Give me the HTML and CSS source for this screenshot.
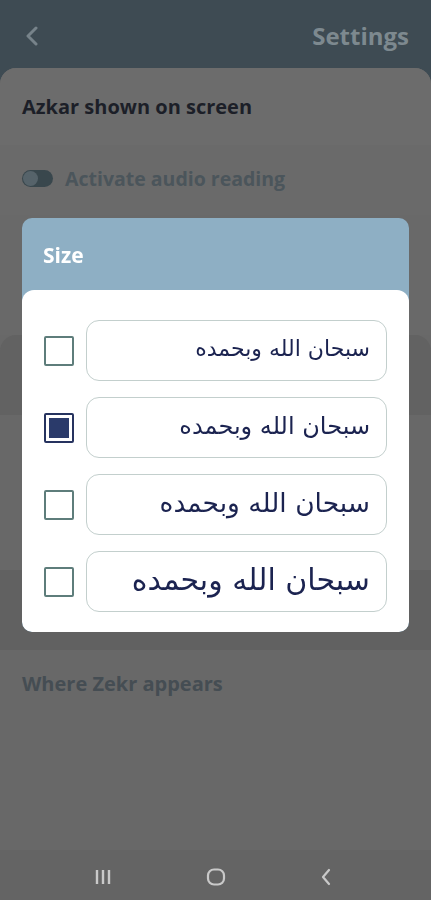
FILE: index.html
```html
<!DOCTYPE html>
<html lang="en">
<head>
    <meta charset="UTF-8">
    <meta name="viewport" content="width=device-width, initial-scale=1.0">
    <title>Settings</title>
    <link rel="stylesheet" href="styles.css">
</head>
<body>
    <div class="app">
        <header class="topbar">
            <svg class="back" width="14" height="20" viewBox="0 0 14 20">
                <path d="M11 2 L3 10 L11 18" fill="none" stroke="#77838a" stroke-width="3" stroke-linecap="round" stroke-linejoin="round"/>
            </svg>
            <span class="title">Settings</span>
        </header>

        <main class="sheet">
            <div class="section section-top">
                <h2 class="section-title">Azkar shown on screen</h2>
            </div>
            <div class="section section-audio">
                <div class="toggle-row">
                    <span class="toggle"><span class="knob"></span></span>
                    <span class="toggle-label">Activate audio reading</span>
                </div>
            </div>
            <div class="band band-a"></div>
            <div class="band band-b"></div>
            <div class="band band-c"></div>
            <div class="band band-d"></div>
            <div class="section section-where">
                <h2 class="section-title dim">Where Zekr appears</h2>
            </div>
        </main>

        <nav class="navbar">
            <svg width="18" height="18" viewBox="0 0 18 18">
                <path d="M3 2 V16 M9 2 V16 M15 2 V16" stroke="#c9c9c9" stroke-width="2.4"/>
            </svg>
            <svg width="20" height="18" viewBox="0 0 20 18">
                <rect x="2" y="1.5" width="16" height="15" rx="6" fill="none" stroke="#c9c9c9" stroke-width="2.2"/>
            </svg>
            <svg width="12" height="18" viewBox="0 0 12 18">
                <path d="M9 2 L3 9 L9 16" fill="none" stroke="#c9c9c9" stroke-width="2.2" stroke-linecap="round" stroke-linejoin="round"/>
            </svg>
        </nav>
    </div>

    <div class="dialog">
        <div class="dialog-head">Size</div>
        <div class="dialog-body">
            <div class="option">
                <span class="check"></span>
                <div class="sample size-1">سبحان الله وبحمده</div>
            </div>
            <div class="option">
                <span class="check checked"></span>
                <div class="sample size-2">سبحان الله وبحمده</div>
            </div>
            <div class="option">
                <span class="check"></span>
                <div class="sample size-3">سبحان الله وبحمده</div>
            </div>
            <div class="option">
                <span class="check"></span>
                <div class="sample size-4">سبحان الله وبحمده</div>
            </div>
        </div>
    </div>
</body>
</html>
```

FILE: styles.css
```css
body {
    margin: 0;
    padding: 0;
    background-color: #686868;
    font-family: "Open Sans", "Liberation Sans", sans-serif;
}
.app {
    display: flex;
    flex-direction: column;
    height: 900px;
}
.topbar {
    height: 86px;
    background-color: #3e4b53;
    display: flex;
    justify-content: space-between;
    align-items: flex-start;
    padding: 19px 22px 0 25px;
    box-sizing: border-box;
}
.back {
    margin-top: 7px;
}
.title {
    font-size: 24px;
    font-weight: bold;
    color: #7d898f;
}
.sheet {
    flex: 1;
    margin-top: -18px;
    background-color: #686868;
    border-radius: 16px 16px 0 0;
    display: flex;
    flex-direction: column;
    overflow: hidden;
}
.section {
    padding: 0 22px;
}
.section-top {
    height: 77px;
    background-color: #6c6c6c;
    display: flex;
    align-items: center;
}
.section-title {
    margin: 0;
    font-size: 20px;
    font-weight: bold;
    color: #1c1f28;
}
.section-title.dim {
    color: #454d53;
}
.section-audio {
    height: 70px;
    background-color: #6a6a6a;
}
.toggle-row {
    display: flex;
    align-items: center;
    gap: 12px;
    padding-top: 20px;
}
.toggle {
    width: 31px;
    height: 17px;
    border-radius: 9px;
    background-color: #39474d;
    position: relative;
}
.knob {
    position: absolute;
    left: 1px;
    top: 1px;
    width: 15px;
    height: 15px;
    border-radius: 50%;
    background-color: #56636a;
}
.toggle-label {
    font-size: 19.5px;
    font-weight: bold;
    color: #4b555b;
}
.band-a {
    height: 120px;
    background-color: #696969;
}
.band-b {
    height: 80px;
    background-color: #626262;
    border-radius: 16px 16px 0 0;
}
.band-c {
    height: 155px;
    background-color: #686868;
}
.band-d {
    height: 80px;
    background-color: #616161;
}
.section-where {
    flex: 1;
    padding-top: 20px;
    background-color: #686868;
}
.navbar {
    height: 50px;
    background-color: #646464;
    display: flex;
    justify-content: space-between;
    align-items: center;
    padding: 4px 99px 0 94px;
    box-sizing: border-box;
}
.dialog {
    position: fixed;
    top: 218px;
    left: 22px;
    width: 387px;
    border-radius: 10px;
    overflow: hidden;
    background-color: #8eafc4;
}
.dialog-head {
    height: 72px;
    padding: 2px 21px 0 21px;
    box-sizing: border-box;
    display: flex;
    align-items: center;
    font-size: 21px;
    font-weight: bold;
    color: #ffffff;
}
.dialog-body {
    background-color: #ffffff;
    border-radius: 12px 12px 10px 10px;
    padding: 30px 22px 20px 22px;
    display: flex;
    flex-direction: column;
    gap: 16px;
}
.option {
    display: flex;
    align-items: center;
    gap: 12px;
}
.check {
    width: 26px;
    height: 26px;
    border: 2px solid #5e7d7b;
    border-radius: 2px;
    flex-shrink: 0;
    box-sizing: content-box;
}
.check.checked {
    border-color: #26335f;
    background-color: #2a3a6a;
    box-shadow: inset 0 0 0 3px #ffffff;
}
.sample {
    flex: 1;
    height: 61px;
    box-sizing: border-box;
    border: 1px solid #c3cfcd;
    border-radius: 13px;
    display: flex;
    align-items: center;
    justify-content: flex-start;
    padding: 0 16px 4px 16px;
    direction: rtl;
    font-family: "DejaVu Sans", sans-serif;
    color: #1b2350;
}
.size-1 {
    font-size: 22px;
}
.size-2 {
    font-size: 24px;
}
.size-3 {
    font-size: 26.5px;
}
.size-4 {
    font-size: 30px;
}
```
